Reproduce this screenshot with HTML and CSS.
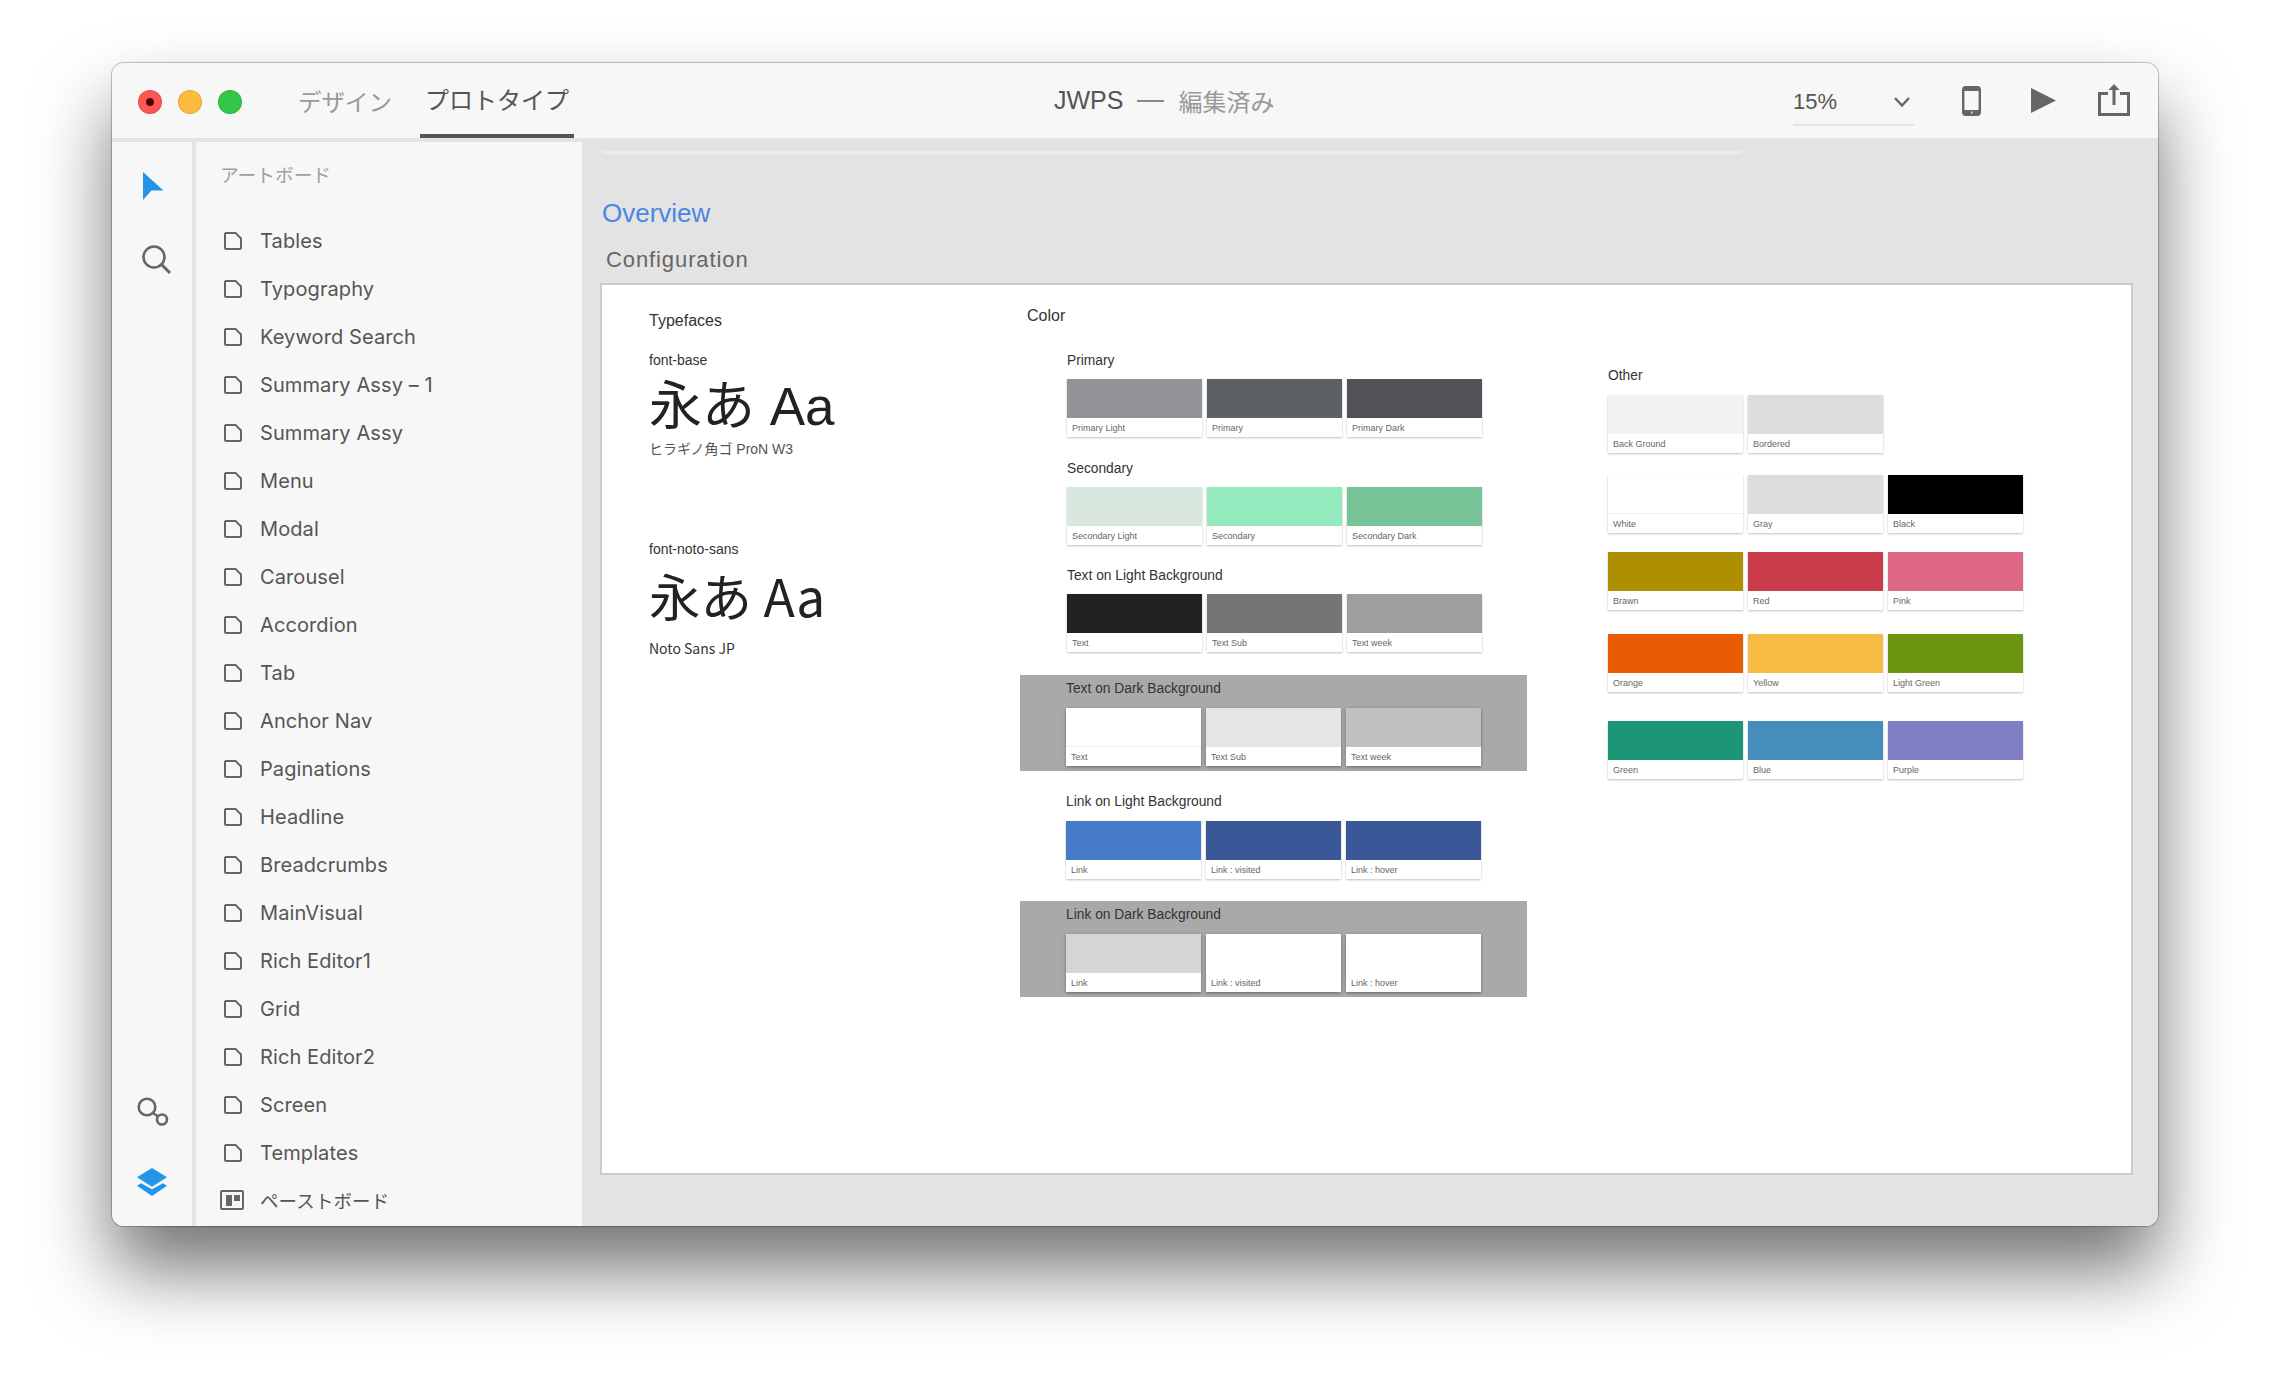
FILE: index.html
```html
<!DOCTYPE html>
<html lang="ja">
<head>
    <meta charset="UTF-8">
    <title>JWPS</title>
    <link rel="stylesheet" href="styles.css">
</head>
<body>
<div class="window">
    <!-- Title bar -->
    <header class="titlebar">
        <div class="lights">
            <span class="light light-red"></span>
            <span class="light light-yellow"></span>
            <span class="light light-green"></span>
        </div>
        <nav class="tabs">
            <span class="tab">デザイン</span>
            <span class="tab tab-active">プロトタイプ</span>
        </nav>
        <div class="doc-title">
            <span class="doc-name">JWPS</span>
            <span class="doc-dash"></span>
            <span class="doc-state">編集済み</span>
        </div>
        <div class="tools">
            <div class="zoom-select">
                <span>15%</span>
                <svg width="16" height="10" viewBox="0 0 16 10"><path d="M1 1l7 7.500L15 1" fill="none" stroke="#666" stroke-width="2.400"/></svg>
            </div>
            <svg class="tool-phone" width="19" height="30" viewBox="0 0 19 30">
                <rect x="1.200" y="1.200" width="16.600" height="27.600" rx="2.500" fill="none" stroke="#666" stroke-width="2.400"/>
                <rect x="1" y="1" width="17" height="4" fill="#666"/>
                <rect x="1" y="24" width="17" height="5" fill="#666"/>
                <rect x="9" y="25.500" width="1.400" height="2" fill="#eee"/>
            </svg>
            <svg class="tool-play" width="25" height="25" viewBox="0 0 25 25"><path d="M0 0l25 12.500L0 25z" fill="#666"/></svg>
            <svg class="tool-share" width="32" height="32" viewBox="0 0 32 32">
                <path d="M10 9.500H1.500v21h29v-21H22" fill="none" stroke="#666" stroke-width="3"/>
                <path d="M16 21V3" stroke="#666" stroke-width="3"/>
                <path d="M16 0l5.500 6h-11z" fill="#666"/>
            </svg>
        </div>
    </header>

    <div class="main">
        <!-- Icon rail -->
        <aside class="rail">
            <svg class="rail-arrow" width="21" height="28" viewBox="0 0 21 28"><path d="M0 0l20.500 18.500H8.500L0 28z" fill="#2394e8"/></svg>
            <svg class="rail-search" width="30" height="30" viewBox="0 0 30 30">
                <circle cx="12" cy="12" r="10.500" fill="none" stroke="#666" stroke-width="2.600"/>
                <path d="M19.500 19.500l8.500 8.500" stroke="#666" stroke-width="3"/>
            </svg>
            <div class="rail-bottom">
                <svg class="rail-link" width="32" height="30" viewBox="0 0 32 30">
                    <circle cx="10" cy="10" r="8.300" fill="none" stroke="#666" stroke-width="2.600"/>
                    <circle cx="25" cy="22.500" r="5" fill="none" stroke="#666" stroke-width="2.600"/>
                    <path d="M16 16l5 3.500" stroke="#666" stroke-width="2.600"/>
                </svg>
                <svg class="rail-layers" width="30" height="28" viewBox="0 0 30 28">
                    <path d="M15 0l15 9.300-15 9.400L0 9.300z" fill="#2394e8"/>
                    <path d="M0 17.700l4-2.400 11 6 11-6 4 2.400L15 28z" fill="#2394e8"/>
                </svg>
            </div>
        </aside>

        <!-- Artboard list -->
        <aside class="sidebar">
            <div class="sidebar-title">アートボード</div>
            <ul class="board-list">
                <li class="board"><svg class="page-icon" viewBox="0 0 18 18"><path d="M2 1h9.500L17 6.500V15.500a1.500 1.500 0 0 1-1.500 1.500h-13A1.500 1.500 0 0 1 1 15.500V2a1 1 0 0 1 1-1z" /></svg>Tables</li>
                <li class="board"><svg class="page-icon" viewBox="0 0 18 18"><path d="M2 1h9.500L17 6.500V15.500a1.500 1.500 0 0 1-1.500 1.500h-13A1.500 1.500 0 0 1 1 15.500V2a1 1 0 0 1 1-1z" /></svg>Typography</li>
                <li class="board"><svg class="page-icon" viewBox="0 0 18 18"><path d="M2 1h9.500L17 6.500V15.500a1.500 1.500 0 0 1-1.500 1.500h-13A1.500 1.500 0 0 1 1 15.500V2a1 1 0 0 1 1-1z" /></svg>Keyword Search</li>
                <li class="board"><svg class="page-icon" viewBox="0 0 18 18"><path d="M2 1h9.500L17 6.500V15.500a1.500 1.500 0 0 1-1.500 1.500h-13A1.500 1.500 0 0 1 1 15.500V2a1 1 0 0 1 1-1z" /></svg>Summary Assy – 1</li>
                <li class="board"><svg class="page-icon" viewBox="0 0 18 18"><path d="M2 1h9.500L17 6.500V15.500a1.500 1.500 0 0 1-1.500 1.500h-13A1.500 1.500 0 0 1 1 15.500V2a1 1 0 0 1 1-1z" /></svg>Summary Assy</li>
                <li class="board"><svg class="page-icon" viewBox="0 0 18 18"><path d="M2 1h9.500L17 6.500V15.500a1.500 1.500 0 0 1-1.500 1.500h-13A1.500 1.500 0 0 1 1 15.500V2a1 1 0 0 1 1-1z" /></svg>Menu</li>
                <li class="board"><svg class="page-icon" viewBox="0 0 18 18"><path d="M2 1h9.500L17 6.500V15.500a1.500 1.500 0 0 1-1.500 1.500h-13A1.500 1.500 0 0 1 1 15.500V2a1 1 0 0 1 1-1z" /></svg>Modal</li>
                <li class="board"><svg class="page-icon" viewBox="0 0 18 18"><path d="M2 1h9.500L17 6.500V15.500a1.500 1.500 0 0 1-1.500 1.500h-13A1.500 1.500 0 0 1 1 15.500V2a1 1 0 0 1 1-1z" /></svg>Carousel</li>
                <li class="board"><svg class="page-icon" viewBox="0 0 18 18"><path d="M2 1h9.500L17 6.500V15.500a1.500 1.500 0 0 1-1.500 1.500h-13A1.500 1.500 0 0 1 1 15.500V2a1 1 0 0 1 1-1z" /></svg>Accordion</li>
                <li class="board"><svg class="page-icon" viewBox="0 0 18 18"><path d="M2 1h9.500L17 6.500V15.500a1.500 1.500 0 0 1-1.500 1.500h-13A1.500 1.500 0 0 1 1 15.500V2a1 1 0 0 1 1-1z" /></svg>Tab</li>
                <li class="board"><svg class="page-icon" viewBox="0 0 18 18"><path d="M2 1h9.500L17 6.500V15.500a1.500 1.500 0 0 1-1.500 1.500h-13A1.500 1.500 0 0 1 1 15.500V2a1 1 0 0 1 1-1z" /></svg>Anchor Nav</li>
                <li class="board"><svg class="page-icon" viewBox="0 0 18 18"><path d="M2 1h9.500L17 6.500V15.500a1.500 1.500 0 0 1-1.500 1.500h-13A1.500 1.500 0 0 1 1 15.500V2a1 1 0 0 1 1-1z" /></svg>Paginations</li>
                <li class="board"><svg class="page-icon" viewBox="0 0 18 18"><path d="M2 1h9.500L17 6.500V15.500a1.500 1.500 0 0 1-1.500 1.500h-13A1.500 1.500 0 0 1 1 15.500V2a1 1 0 0 1 1-1z" /></svg>Headline</li>
                <li class="board"><svg class="page-icon" viewBox="0 0 18 18"><path d="M2 1h9.500L17 6.500V15.500a1.500 1.500 0 0 1-1.500 1.500h-13A1.500 1.500 0 0 1 1 15.500V2a1 1 0 0 1 1-1z" /></svg>Breadcrumbs</li>
                <li class="board"><svg class="page-icon" viewBox="0 0 18 18"><path d="M2 1h9.500L17 6.500V15.500a1.500 1.500 0 0 1-1.500 1.500h-13A1.500 1.500 0 0 1 1 15.500V2a1 1 0 0 1 1-1z" /></svg>MainVisual</li>
                <li class="board"><svg class="page-icon" viewBox="0 0 18 18"><path d="M2 1h9.500L17 6.500V15.500a1.500 1.500 0 0 1-1.500 1.500h-13A1.500 1.500 0 0 1 1 15.500V2a1 1 0 0 1 1-1z" /></svg>Rich Editor1</li>
                <li class="board"><svg class="page-icon" viewBox="0 0 18 18"><path d="M2 1h9.500L17 6.500V15.500a1.500 1.500 0 0 1-1.500 1.500h-13A1.500 1.500 0 0 1 1 15.500V2a1 1 0 0 1 1-1z" /></svg>Grid</li>
                <li class="board"><svg class="page-icon" viewBox="0 0 18 18"><path d="M2 1h9.500L17 6.500V15.500a1.500 1.500 0 0 1-1.500 1.500h-13A1.500 1.500 0 0 1 1 15.500V2a1 1 0 0 1 1-1z" /></svg>Rich Editor2</li>
                <li class="board"><svg class="page-icon" viewBox="0 0 18 18"><path d="M2 1h9.500L17 6.500V15.500a1.500 1.500 0 0 1-1.500 1.500h-13A1.500 1.500 0 0 1 1 15.500V2a1 1 0 0 1 1-1z" /></svg>Screen</li>
                <li class="board"><svg class="page-icon" viewBox="0 0 18 18"><path d="M2 1h9.500L17 6.500V15.500a1.500 1.500 0 0 1-1.500 1.500h-13A1.500 1.500 0 0 1 1 15.500V2a1 1 0 0 1 1-1z" /></svg>Templates</li>
                <li class="board board-paste">
                    <svg class="paste-icon" width="24" height="20" viewBox="0 0 24 20">
                        <rect x="1" y="1" width="22" height="18" rx="1" fill="none" stroke="#666" stroke-width="2"/>
                        <rect x="6" y="5" width="6" height="11" fill="#666"/>
                        <rect x="14" y="5" width="6" height="6" fill="#666"/>
                    </svg>ペーストボード
                </li>
            </ul>
        </aside>

        <!-- Canvas -->
        <section class="canvas">
            <div class="canvas-line"></div>
            <h1 class="page-head">Overview</h1>
            <h2 class="board-name">Configuration</h2>
            <div class="artboard">
                <div class="type-col">
                    <h3 class="section-title">Typefaces</h3>
                    <div class="font-name font-name-base">font-base</div>
                    <div class="sample">永あ Aa</div>
                    <div class="font-note">ヒラギノ角ゴ ProN W3</div>
                    <div class="font-name font-name-noto">font-noto-sans</div>
                    <div class="sample sample-noto">永あ Aa</div>
                    <div class="font-note font-note-noto">Noto Sans JP</div>
                </div>

                <div class="color-col">
                    <h3 class="section-title section-title-color">Color</h3>

                    <div class="group">
                        <h4 class="group-title">Primary</h4>
                        <div class="swatches">
                            <div class="swatch"><div class="chip c-primary-light"></div><div class="label">Primary Light</div></div>
                            <div class="swatch"><div class="chip c-primary"></div><div class="label">Primary</div></div>
                            <div class="swatch"><div class="chip c-primary-dark"></div><div class="label">Primary Dark</div></div>
                        </div>
                    </div>

                    <div class="group group-wide">
                        <h4 class="group-title">Secondary</h4>
                        <div class="swatches">
                            <div class="swatch"><div class="chip c-secondary-light"></div><div class="label">Secondary Light</div></div>
                            <div class="swatch"><div class="chip c-secondary"></div><div class="label">Secondary</div></div>
                            <div class="swatch"><div class="chip c-secondary-dark"></div><div class="label">Secondary Dark</div></div>
                        </div>
                    </div>

                    <div class="group">
                        <h4 class="group-title">Text on Light Background</h4>
                        <div class="swatches">
                            <div class="swatch"><div class="chip c-text"></div><div class="label">Text</div></div>
                            <div class="swatch"><div class="chip c-text-sub"></div><div class="label">Text Sub</div></div>
                            <div class="swatch"><div class="chip c-text-week"></div><div class="label">Text week</div></div>
                        </div>
                    </div>

                    <div class="group group-dark group-panel-first">
                        <h4 class="group-title">Text on Dark Background</h4>
                        <div class="swatches">
                            <div class="swatch"><div class="chip c-white"></div><div class="label">Text</div></div>
                            <div class="swatch"><div class="chip c-dark-sub"></div><div class="label">Text Sub</div></div>
                            <div class="swatch"><div class="chip c-dark-week"></div><div class="label">Text week</div></div>
                        </div>
                    </div>

                    <div class="group group-link">
                        <h4 class="group-title">Link on Light Background</h4>
                        <div class="swatches">
                            <div class="swatch"><div class="chip c-link"></div><div class="label">Link</div></div>
                            <div class="swatch"><div class="chip c-link-dark"></div><div class="label">Link : visited</div></div>
                            <div class="swatch"><div class="chip c-link-dark"></div><div class="label">Link : hover</div></div>
                        </div>
                    </div>

                    <div class="group group-dark">
                        <h4 class="group-title">Link on Dark Background</h4>
                        <div class="swatches">
                            <div class="swatch"><div class="chip c-dark-link"></div><div class="label">Link</div></div>
                            <div class="swatch"><div class="chip c-white-plain"></div><div class="label">Link : visited</div></div>
                            <div class="swatch"><div class="chip c-white-plain"></div><div class="label">Link : hover</div></div>
                        </div>
                    </div>
                </div>

                <div class="other-col">
                    <h4 class="group-title">Other</h4>
                    <div class="swatches">
                        <div class="swatch"><div class="chip c-background"></div><div class="label">Back Ground</div></div>
                        <div class="swatch"><div class="chip c-gray"></div><div class="label">Bordered</div></div>
                    </div>
                    <div class="swatches row-2">
                        <div class="swatch"><div class="chip c-white"></div><div class="label">White</div></div>
                        <div class="swatch"><div class="chip c-gray"></div><div class="label">Gray</div></div>
                        <div class="swatch"><div class="chip c-black"></div><div class="label">Black</div></div>
                    </div>
                    <div class="swatches row-3">
                        <div class="swatch"><div class="chip c-brawn"></div><div class="label">Brawn</div></div>
                        <div class="swatch"><div class="chip c-red"></div><div class="label">Red</div></div>
                        <div class="swatch"><div class="chip c-pink"></div><div class="label">Pink</div></div>
                    </div>
                    <div class="swatches row-4">
                        <div class="swatch"><div class="chip c-orange"></div><div class="label">Orange</div></div>
                        <div class="swatch"><div class="chip c-yellow"></div><div class="label">Yellow</div></div>
                        <div class="swatch"><div class="chip c-light-green"></div><div class="label">Light Green</div></div>
                    </div>
                    <div class="swatches row-5">
                        <div class="swatch"><div class="chip c-green"></div><div class="label">Green</div></div>
                        <div class="swatch"><div class="chip c-blue"></div><div class="label">Blue</div></div>
                        <div class="swatch"><div class="chip c-purple"></div><div class="label">Purple</div></div>
                    </div>
                </div>
            </div>
        </section>
    </div>
</div>
</body>
</html>
```

FILE: styles.css
```css
* {
    box-sizing: border-box;
}

html,
body {
    margin: 0;
    height: 100%;
    background: #fff;
}

body {
    padding: 63px 112px 0;
    overflow: hidden;
    font-family: Inter, "Noto Sans CJK JP", sans-serif;
    color: #555;
}

h1, h2, h3, h4, ul {
    margin: 0;
    padding: 0;
    font-weight: 400;
}

.window {
    width: 2046px;
    height: 1163px;
    display: flex;
    flex-direction: column;
    border-radius: 12px;
    background: #f7f7f7;
    box-shadow: 0 0 1px 1px rgba(0, 0, 0, 0.25), 0 44px 74px rgba(0, 0, 0, 0.55);
}

/* title bar */
.titlebar {
    height: 75px;
    flex: none;
    display: flex;
    align-items: center;
    border-radius: 12px 12px 0 0;
    background: #f7f7f7;
}

.lights {
    display: flex;
    gap: 16px;
    margin: 0 0 0 26px;
    transform: translateY(1px);
}

.light {
    width: 24px;
    height: 24px;
    border-radius: 50%;
    border: 1px solid rgba(0, 0, 0, 0.1);
}

.light-red {
    background: radial-gradient(circle, #4d0000 0, #4d0000 3.5px, #fc5753 4.5px);
}

.light-yellow {
    background: #fdbc40;
}

.light-green {
    background: #33c748;
}

.tabs {
    display: flex;
    align-self: stretch;
    margin-left: 50px;
}

.tab {
    display: flex;
    align-items: center;
    padding: 0 6px;
    margin-right: 22px;
    font-size: 23.5px;
    color: #999;
}

.tab-active {
    margin: 0;
    padding: 0 5px;
    color: #555;
    font-size: 24px;
    border-bottom: 4px solid #555;
}

.doc-title {
    display: flex;
    align-items: center;
    margin-left: 480px;
    color: #999;
}

.doc-name {
    font-family: "Liberation Sans", sans-serif;
    font-size: 25px;
    color: #555;
}

.doc-dash {
    width: 27px;
    height: 2px;
    margin: 0 14px;
    background: #888;
}

.doc-state {
    font-size: 24px;
}

.tools {
    display: flex;
    align-items: center;
    margin-left: auto;
    padding-right: 28px;
}

.zoom-select {
    width: 121px;
    height: 45px;
    display: flex;
    align-items: center;
    justify-content: space-between;
    padding-right: 4px;
    margin-top: 5px;
    border-bottom: 2px solid #e4e4e4;
    font-family: "Liberation Sans", sans-serif;
    font-size: 22px;
}

.tool-phone {
    margin-left: 48px;
}

.tool-play {
    margin-left: 50px;
}

.tool-share {
    margin-left: 42px;
    margin-top: -2px;
}

/* main area */
.main {
    flex: 1;
    min-height: 0;
    display: flex;
    border-radius: 0 0 12px 12px;
    overflow: hidden;
}

.rail {
    width: 84px;
    flex: none;
    display: flex;
    flex-direction: column;
    align-items: flex-start;
    border-top: 4px solid #e4e4e4;
    border-right: 4px solid #e4e4e4;
    background: #f7f7f7;
}

.rail-arrow {
    margin: 30px 0 0 31px;
}

.rail-search {
    margin: 45px 0 0 30px;
}

.rail-bottom {
    margin-top: auto;
    padding: 0 0 30px 25px;
    display: flex;
    flex-direction: column;
}

.rail-layers {
    margin-top: 41px;
}

.sidebar {
    width: 386px;
    flex: none;
    overflow: hidden;
    border-top: 4px solid #e4e4e4;
    background: #f7f7f7;
}

.sidebar-title {
    height: 75px;
    padding: 20px 0 0 24px;
    font-size: 18.7px;
    line-height: 28px;
    color: #a0a0a0;
}

.board-list {
    list-style: none;
}

.board {
    height: 48px;
    display: flex;
    align-items: center;
    padding-left: 28px;
    font-size: 20px;
    letter-spacing: 0.1px;
    white-space: nowrap;
}

.page-icon {
    width: 18px;
    height: 18px;
    margin-right: 18px;
    flex: none;
    fill: none;
    stroke: #666;
    stroke-width: 2;
}

.board-paste {
    padding: 0 0 2px 24px;
    font-size: 18.5px;
}

.paste-icon {
    margin-right: 16px;
    flex: none;
}

.canvas {
    flex: 1;
    min-width: 0;
    padding: 13px 0 0 18px;
    background: #e3e3e3;
}

.canvas-line {
    width: 1140px;
    height: 3px;
    margin-left: 2px;
    background: #ececec;
}

.page-head {
    margin: 42px 0 0 2px;
    font-family: "Liberation Sans", sans-serif;
    font-size: 26px;
    line-height: 34px;
    color: #4a86e8;
}

.board-name {
    margin: 17px 0 0 6px;
    font-family: "Liberation Sans", sans-serif;
    font-size: 22px;
    line-height: 26px;
    letter-spacing: 0.9px;
    color: #666;
}

/* artboard */
.artboard {
    width: 1533px;
    height: 892px;
    margin-top: 10px;
    display: flex;
    border: 2px solid #ccc;
    background: #fff;
    color: #333;
    font-family: "Liberation Sans", "Noto Sans CJK JP", sans-serif;
}

.type-col {
    width: 418px;
    flex: none;
    padding: 28px 0 0 47px;
}

.section-title {
    font-size: 16px;
    line-height: 16px;
}

.font-name {
    font-size: 14px;
    line-height: 16px;
}

.font-name-base {
    margin-top: 23px;
}

.font-name-noto {
    margin-top: 84px;
}

.sample {
    margin-top: 1px;
    font-size: 53px;
    line-height: 76px;
    color: #222;
    white-space: nowrap;
}

.sample-noto {
    margin-top: 0;
    font-family: "Noto Sans CJK JP", sans-serif;
    font-size: 51.5px;
}

.font-note {
    margin-top: -4px;
    font-size: 14px;
    line-height: 16px;
    color: #555;
}

.font-note-noto {
    margin-top: 7px;
    font-family: "Noto Sans CJK JP", sans-serif;
    color: #333;
}

.color-col {
    width: 507px;
    flex: none;
    padding-top: 23px;
}

.section-title-color {
    padding-left: 7px;
}

.group {
    margin-top: 23px;
    padding-left: 47px;
}

.group-wide {
    margin-top: 24px;
}

.color-col > .section-title + .group {
    margin-top: 29px;
}

.group-dark {
    height: 96px;
    margin-top: 22px;
    padding: 6px 0 0 46px;
    background: #a9a9a9;
}

.group-panel-first {
    margin-top: 23px;
}

.group-link {
    padding-left: 46px;
}

.group-title {
    margin-bottom: 10px;
    font-size: 13.8px;
    line-height: 16px;
    color: #333;
}

.group-dark .group-title,
.group-link .group-title {
    margin-bottom: 11px;
}

.swatches {
    display: flex;
    gap: 5px;
}

.swatch {
    width: 135px;
    height: 58px;
    background: #fff;
    box-shadow: 0 1px 2px rgba(0, 0, 0, 0.25);
}

.group-dark .swatch {
    box-shadow: 0 1px 3px rgba(0, 0, 0, 0.4);
}

.chip {
    height: 39px;
}

.label {
    padding-left: 5px;
    font-size: 9px;
    line-height: 20px;
    color: #666;
}

.other-col {
    width: 415px;
    flex: none;
    margin-left: 81px;
    padding-top: 83px;
}

.other-col .group-title {
    margin-bottom: 11px;
}

.row-2 {
    margin-top: 22px;
}

.row-3 {
    margin-top: 19px;
}

.row-4 {
    margin-top: 24px;
}

.row-5 {
    margin-top: 29px;
}

/* colors */
.c-primary-light { background: #929497; }
.c-primary { background: #5c5f63; }
.c-primary-dark { background: #525356; }
.c-secondary-light { background: #d9e8df; }
.c-secondary { background: #94eabc; }
.c-secondary-dark { background: #78c498; }
.c-text { background: #222; }
.c-text-sub { background: #757575; }
.c-text-week { background: #9e9e9e; }
.c-white { background: #fff; border-bottom: 1px solid #eee; }
.c-white-plain { background: #fff; }
.c-dark-sub { background: #e5e5e5; }
.c-dark-week { background: #c0c0c0; }
.c-link { background: #477bc9; }
.c-link-dark { background: #3a5897; }
.c-dark-link { background: #d4d5d7; }
.c-background { background: #f1f2f4; }
.c-gray { background: #ddd; }
.c-black { background: #000; }
.c-brawn { background: #ad8f00; }
.c-red { background: #cb3c4b; }
.c-pink { background: #de6785; }
.c-orange { background: #e95c04; }
.c-yellow { background: #f6bb43; }
.c-light-green { background: #6e9512; }
.c-green { background: #1d9678; }
.c-blue { background: #478dbb; }
.c-purple { background: #7f7ec2; }
```
